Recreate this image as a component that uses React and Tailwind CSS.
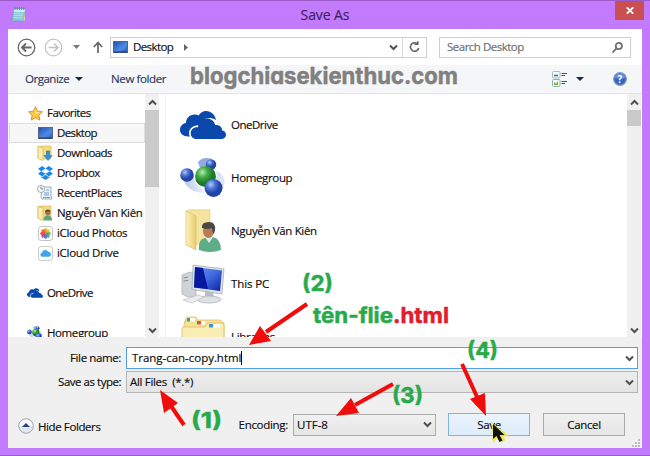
import React from 'react';

function Chevron({ up = false, className = '' }) {
  return (
    <svg className={`h-[7px] w-[9px] shrink-0 ${className}`} viewBox="0 0 9 7" fill="none" stroke="#505050" strokeWidth="2">
      <path d={up ? 'M1 5.5 4.5 2 8 5.5' : 'M1 1.5 4.5 5 8 1.5'} />
    </svg>
  );
}

function Caret({ className = 'w-[8px]' }) {
  return (
    <svg className={`h-[4px] shrink-0 ${className}`} viewBox="0 0 8 4" preserveAspectRatio="none" fill="currentColor">
      <path d="M0 0h8L4 4z" />
    </svg>
  );
}

function NotepadIcon() {
  return (
    <svg className="h-4 w-4" viewBox="0 0 16 16">
      <path d="M3 2.500h11l-1 12.500H1z" fill="#8cc9d9" stroke="#6e99a8" strokeWidth=".6" />
      <path d="M3 3h11l-.3 3H2.7z" fill="#c9edf4" />
      <path d="M3 7.5h9M2.800 9.500h9M2.600 11.500h9" stroke="#b4e4ee" strokeWidth=".7" />
      <path d="M4 1v3M6.200 1v3M8.400 1v3M10.600 1v3M12.800 1v3" stroke="#6b7c84" strokeWidth=".9" />
      <path d="M14 5v9l-1.300 1z" fill="#e8d49a" />
    </svg>
  );
}

function ScreenIcon() {
  return (
    <svg className="h-3 w-[15px]" viewBox="0 0 15 12">
      <defs>
        <linearGradient id="screen" x1="0" y1="0" x2="1" y2="1">
          <stop offset="0" stopColor="#1e4fae" />
          <stop offset=".6" stopColor="#4f8ae2" />
          <stop offset="1" stopColor="#2558b4" />
        </linearGradient>
      </defs>
      <rect x=".5" y=".5" width="14" height="11" fill="url(#screen)" stroke="#53668a" />
      <path d="M1 11h13" stroke="#1d3561" />
    </svg>
  );
}

function StarIcon() {
  return (
    <svg className="h-[15px] w-[15px]" viewBox="0 0 16 16">
      <path d="m8 .8 2.200 4.700 5.200.7-3.800 3.600 1 5.200L8 12.500 3.400 15l1-5.200L.6 6.200l5.200-.7z" fill="#fbc84a" stroke="#e08a2c" />
      <path d="m8 3 1.300 3.400 3.400.6-4.700 2z" fill="#ffe9a0" />
    </svg>
  );
}

function FolderShape() {
  return (
    <g>
      <path d="M1 1.500 5 1h9v13H5l-4-1z" fill="#f3da85" stroke="#d9b95a" strokeWidth=".7" />
      <path d="M1 1.500 6 3v12.500l-5-2z" fill="#fbeeb0" stroke="#d5b557" strokeWidth=".7" />
    </g>
  );
}

function DownloadsIcon() {
  return (
    <svg className="h-4 w-4" viewBox="0 0 16 16">
      <FolderShape />
      <path d="M9.500 6h3v4.500H15L11 15.500l-4-5h2.500z" fill="#2f93e0" stroke="#1b6fb8" strokeWidth=".6" />
    </svg>
  );
}

function UserFolderIcon() {
  return (
    <svg className="h-4 w-4" viewBox="0 0 16 16">
      <FolderShape />
      <path d="M6.500 15.500q0-5 4.200-5t4.500 5z" fill="#5aa77f" />
      <circle cx="10.800" cy="7.800" r="2.600" fill="#a9714c" />
      <path d="M8 7.500q0-3 2.800-3t2.800 3l-2-1.500z" fill="#4a4a45" />
    </svg>
  );
}

function DropboxIcon() {
  return (
    <svg className="h-[14px] w-[15px]" viewBox="0 0 16 15" fill="#1787e8">
      <path d="M4.600 0 8 2.800 3.400 5.600 0 2.900zM11.400 0 16 2.900l-3.400 2.700L8 2.800zM0 8.400l3.400-2.800L8 8.400l-3.400 2.800zM12.600 5.600 16 8.400l-4.600 2.800L8 8.400zM8 9.300l3.400 2.700 1.400-.9v1L8 15l-4.800-2.900v-1l1.400.9z" />
    </svg>
  );
}

function RecentIcon() {
  return (
    <svg className="h-4 w-4" viewBox="0 0 16 16">
      <path d="M5 2h9v9l1 3H5l-1-2z" fill="#edf3f8" stroke="#8a9bab" strokeWidth=".8" />
      <path d="M7 8h5M7 10h5M6 12.500h7M9 5h3" stroke="#6a9dcc" />
      <circle cx="4" cy="4" r="3.500" fill="#f7f9fb" stroke="#8b969f" strokeWidth=".8" />
      <path d="M4 1.800V4h2" stroke="#5e6b76" fill="none" strokeWidth=".8" />
    </svg>
  );
}

function PhotosIcon() {
  const petals = ['#f6a21b', '#d9c21d', '#71b544', '#38a99a', '#4c78cf', '#9a54b0', '#e3405c', '#ee5a2a'];
  return (
    <svg className="h-[15px] w-[15px]" viewBox="0 0 16 16">
      <rect x=".5" y=".5" width="15" height="15" rx="3" fill="#fff" stroke="#bdbdbd" />
      {petals.map((color, i) => (
        <ellipse key={color} cx="8" cy="5" rx="1.900" ry="2.800" fill={color} opacity=".9" transform={`rotate(${i * 45} 8 8)`} />
      ))}
    </svg>
  );
}

function DriveIcon() {
  return (
    <svg className="h-[15px] w-[15px]" viewBox="0 0 16 16">
      <rect x=".5" y=".5" width="15" height="15" rx="3" fill="#fff" stroke="#c4c4c4" />
      <path d="M4.500 11.500a2.300 2.300 0 0 1-.2-4.500 3.500 3.500 0 0 1 6.600-.8 2.700 2.700 0 0 1 .9 5.300z" fill="#3fa4f0" />
    </svg>
  );
}

function OneDriveIcon({ className }) {
  return (
    <svg className={className} viewBox="0 0 46 28">
      <path d="M8 25.500C3 25.500 0 22.500 0 19c0-4 2.500-6.500 6-7 0-5 4-8.500 8.500-8.500 1.500 0 3 .4 4 1C20.500 1.500 23 0 26 0c5 0 9 3.500 10 9-8-4.500-15-.5-16.500 5.200C13 13.500 9 18 9 22c0 1.500.3 2.500 1 3.500z" fill="#0a48ac" />
      <path d="M17 28c-4 0-6.300-2.600-6.300-5.600 0-3.700 3-6.400 7.300-6 0-5.600 4-8.900 8.700-8.900 4.300 0 7.500 2.500 8.600 6.600 4-.4 6.700 1.800 6.700 5.100 2.500.6 4 2.200 4 4.500 0 2.600-2 4.300-4.500 4.300z" fill="#0a48ac" />
    </svg>
  );
}

function HomegroupIcon({ className, id }) {
  return (
    <svg className={className} viewBox="0 0 46 40">
      <defs>
        <radialGradient id={`${id}-blue`} cx=".35" cy=".3">
          <stop offset="0" stopColor="#b5cdfb" />
          <stop offset=".5" stopColor="#4b74d4" />
          <stop offset="1" stopColor="#2343a5" />
        </radialGradient>
        <radialGradient id={`${id}-green`} cx=".35" cy=".3">
          <stop offset="0" stopColor="#b8efad" />
          <stop offset=".5" stopColor="#42ac48" />
          <stop offset="1" stopColor="#1e7a2c" />
        </radialGradient>
        <linearGradient id={`${id}-trail`}>
          <stop offset="0" stopColor="#b9c9ea" />
          <stop offset="1" stopColor="#eef2fa" />
        </linearGradient>
      </defs>
      <path d="M3 20q4 15 22 15l-3-5q-8-2-8-12z" fill={`url(#${id}-trail)`} />
      <path d="M18 4q5-6 14-3l-1 7q-5-1-11 2z" fill="#93abe0" />
      <path d="M36 13q12 4 7 18l-9-5q4-6 2-13z" fill="#dbe4f5" />
      <circle cx="31" cy="6.500" r="5.200" fill={`url(#${id}-blue)`} />
      <circle cx="7" cy="17" r="6.800" fill={`url(#${id}-blue)`} />
      <circle cx="25.500" cy="18.500" r="10.500" fill={`url(#${id}-green)`} />
      <circle cx="33.500" cy="30" r="9" fill={`url(#${id}-blue)`} />
    </svg>
  );
}

function LargeUserIcon() {
  return (
    <svg className="h-[44px] w-[40px]" viewBox="0 0 40 44">
      <defs>
        <linearGradient id="folderFace">
          <stop offset="0" stopColor="#fdf3bd" />
          <stop offset="1" stopColor="#e9cd6e" />
        </linearGradient>
      </defs>
      <path d="M3 2 7 .8h20V31l-15 5z" fill="#f5e3a0" stroke="#dfc468" strokeWidth=".6" />
      <path d="M3 2 13 7v34L3 36z" fill="url(#folderFace)" stroke="#d6b85c" strokeWidth=".6" />
      <path d="M16 41q-1-11 6-12l8-1q8 2 8 13-11 4-22 0z" fill="#5fad86" />
      <path d="m22 28 4 6 4-6z" fill="#dff1e8" />
      <ellipse cx="25.500" cy="22" rx="5.500" ry="7" fill="#b57e58" />
      <path d="M19 19q-1-6 7-6 7 0 6 8l-1 4q-2-2-2-6-4 2-10 0z" fill="#4c4944" />
    </svg>
  );
}

function ComputerIcon() {
  return (
    <svg className="h-[40px] w-[44px]" viewBox="0 0 44 40">
      <defs>
        <linearGradient id="monitor" x1="0" y1="0" x2="1" y2="1">
          <stop offset="0" stopColor="#6b96f0" />
          <stop offset=".5" stopColor="#3f6be0" />
          <stop offset="1" stopColor="#0a1fa0" />
        </linearGradient>
      </defs>
      <path d="M1 11 9 8l6 2v22l-8 1-6-3z" fill="#cfd4d8" stroke="#9ca3a8" strokeWidth=".6" />
      <path d="M2.500 14 7 13M2.500 17 7 16.500" stroke="#808990" />
      <path d="M24 27h8l1 7h-9z" fill="#b9c0c5" />
      <ellipse cx="28" cy="35.500" rx="12" ry="3.500" fill="#dde1e4" stroke="#a8afb4" strokeWidth=".7" />
      <path d="m12 1 31 4-2 25-30-4.500z" fill="#dce1e5" stroke="#9da7ae" strokeWidth=".7" />
      <path d="m14 3 27 3.500-2 20.500-26-3.500z" fill="url(#monitor)" />
      <path d="m14 3 8 1 5 21-14-1.500z" fill="#0819a0" />
      <path d="m2 36 15-5 6 2-12 6z" fill="#e9ecee" stroke="#b5bbbf" strokeWidth=".6" />
    </svg>
  );
}

function LibrariesIcon() {
  return (
    <svg className="h-[42px] w-[46px]" viewBox="0 0 46 42">
      <path d="M5 5 7 1h9l2 4h20v28H5z" fill="#fae9a4" stroke="#d8bb5d" strokeWidth=".8" />
      <path d="M4 9 5 5h11l2-1h22l4 3v25H4z" fill="#f8e294" stroke="#dbc06b" strokeWidth=".8" />
      <path d="M2 13q0-2 2-2h21l3-4h14q2 0 2 3v32H2z" fill="#fbeeb4" stroke="#d9bb61" strokeWidth=".8" />
      <rect x="7" y="2" width="8" height="3.500" fill="#fff" />
      <rect x="7" y="2" width="3" height="3.500" fill="#44a55b" />
      <rect x="17" y="5" width="8" height="3.500" fill="#fff" />
      <rect x="17" y="5" width="4" height="3.500" fill="#d65743" />
      <rect x="29" y="8" width="11" height="3.500" fill="#fff" />
      <rect x="29" y="8" width="4" height="3.500" fill="#3e97d1" />
    </svg>
  );
}

function SideRow({ icon, children, nested = false, selected = false, label = '' }) {
  return (
    <div className={`flex h-5 w-[136px] shrink-0 items-center border ${nested ? 'pl-[27px]' : 'pl-[17px]'} ${selected ? 'border-[#dedede] bg-[#f7f7f7]' : 'border-transparent'}`}>
      <span className="flex w-4 shrink-0 items-center justify-center">{icon}</span>
      <span className={`ml-[4px] whitespace-nowrap ${label}`}>{children}</span>
    </div>
  );
}

function FileItem({ icon, label, children }) {
  return (
    <div className="flex h-[53.200px] shrink-0 items-center">
      <span className="flex w-[46px] justify-center">{icon}</span>
      <span className={`ml-[5px] ${label}`}>{children}</span>
    </div>
  );
}

function TitleBar() {
  return (
    <div className="flex h-[29px] shrink-0 items-start border-t border-[#9a5bc8]">
      <div className="ml-[11px] mt-[5px] w-[24px]"><NotepadIcon /></div>
      <div className="flex-1 pt-[3px] text-center text-[14px] leading-[22px] tracking-[-0.100px] text-[#3c2359]">Save As</div>
      <div className="mr-[6px] flex h-[19px] w-[29px] items-center justify-center bg-[#c94f50]">
        <svg className="h-[7px] w-[8px]" viewBox="0 0 8 7" stroke="#fff" strokeWidth="1.800"><path d="m.8.300 6.400 6.400M7.200.3.800 6.700" /></svg>
      </div>
    </div>
  );
}

function Navigation() {
  return (
    <div className="flex h-9 shrink-0 items-center bg-white pl-[9px]">
      <svg className="h-[19px] w-[19px]" viewBox="0 0 19 19" fill="none" stroke="#666">
        <circle cx="9.500" cy="9.500" r="8.300" strokeWidth="1.300" />
        <path d="M14.500 9.500H5M9 5.500l-4 4 4 4" strokeWidth="1.900" />
      </svg>
      <svg className="ml-[8px] h-[19px] w-[19px]" viewBox="0 0 19 19" fill="none" stroke="#c4c4c4">
        <circle cx="9.500" cy="9.500" r="8.300" strokeWidth="1.200" />
        <path d="M4.500 9.500H14M10 5.500l4 4-4 4" strokeWidth="1.700" />
      </svg>
      <Caret className="ml-[10px] w-[7px] text-[#777]" />
      <svg className="ml-[13px] h-[12px] w-[10px]" viewBox="0 0 10 12" fill="none" stroke="#666" strokeWidth="1.700"><path d="M5 12V1.500M.8 6 5 1.500 9.200 6" /></svg>
      <div className="ml-[7px] flex h-[21px] w-[317px] items-center border border-[#cfcfcf] pl-[2px]">
        <ScreenIcon />
        <span className="ml-[5px] w-[42px] tracking-[-0.600px]">Desktop</span>
        <svg className="ml-[9px] h-[7px] w-[4px]" viewBox="0 0 4 7"><path d="M0 0v7l4-3.500z" fill="#666" /></svg>
        <span className="flex-1" />
        <Chevron className="mr-[4px]" />
        <span className="flex h-full w-[24px] items-center justify-center border-l border-[#d8d8d8]">
          <svg className="h-[12px] w-[11px]" viewBox="0 0 11 12" fill="none" stroke="#666" strokeWidth="1.600"><path d="M8.300 2.800A4.200 4.200 0 1 0 9.700 7" /><path d="M5.500 3.200h3.300V.2" /></svg>
        </span>
      </div>
      <div className="ml-[12px] flex h-[21px] w-[192px] items-center border border-[#cfcfcf] pl-[7px] pr-[7px] text-[#6d6d6d]">
        <span className="flex-1 tracking-[-0.500px]">Search Desktop</span>
        <svg className="h-[11px] w-[11px]" viewBox="0 0 11 11" fill="none" stroke="#707070" strokeWidth="1.800"><circle cx="6.800" cy="4" r="3.100" /><path d="m4.500 6.300-4 4.200" /></svg>
      </div>
    </div>
  );
}

function Toolbar() {
  return (
    <div className="flex h-[29px] shrink-0 items-center border-b border-[#e2e5e8] bg-[#f5f6f7] pl-[17px] pr-[15px] text-[#26395b]">
      <span className="w-[45px] tracking-[-0.480px]">Organize</span>
      <Caret className="ml-[5px] w-[8px] text-[#172c4c]" />
      <span className="ml-[28px] flex-1 tracking-[-0.370px]">New folder</span>
      <svg className="h-4 w-[15px]" viewBox="0 0 15 16">
        <rect x=".5" y=".5" width="7.500" height="6.500" rx="1" fill="#f4fbff" stroke="#a8bbc5" />
        <rect x=".5" y="8.500" width="7.500" height="7" rx="1" fill="#f5faf3" stroke="#94aebb" />
        <path d="M2 4.500h4" stroke="#2a79a9" strokeWidth="1.600" />
        <path d="m2 11 2 2 2-3v4H2z" fill="#70a82e" />
        <path d="M9.500 2.500H15M9.500 4.500H13M9.500 10.500H15M9.500 12.500H13" stroke="#48515c" />
      </svg>
      <Caret className="ml-[9px] w-[8px] text-[#172c4c]" />
      <svg className="ml-[29px] h-[14px] w-[14px]" viewBox="0 0 14 14">
        <circle cx="7" cy="7" r="6.300" fill="#3365c8" stroke="#8898b6" strokeWidth="1.200" />
        <path d="M1.500 6a5.600 5.600 0 0 1 11 0q-5 1.600-11 0z" fill="#7da7ef" opacity=".6" />
        <text x="7" y="10.800" textAnchor="middle" className="fill-white font-['Open_Sans'] text-[10px] font-bold">?</text>
      </svg>
    </div>
  );
}

function Browser() {
  return (
    <div className="flex h-[243px] shrink-0 overflow-hidden bg-white">
      <div className="flex w-[137px] flex-col pl-[1px] pt-[9px]">
        <SideRow icon={<StarIcon />} label="tracking-[-0.550px]">Favorites</SideRow>
        <SideRow nested selected icon={<ScreenIcon />} label="tracking-[-0.620px]">Desktop</SideRow>
        <SideRow nested icon={<DownloadsIcon />} label="tracking-[-0.550px]">Downloads</SideRow>
        <SideRow nested icon={<DropboxIcon />} label="tracking-[-0.600px]">Dropbox</SideRow>
        <SideRow nested icon={<RecentIcon />} label="tracking-[-0.470px]">RecentPlaces</SideRow>
        <SideRow nested icon={<UserFolderIcon />} label="tracking-[-0.370px]">Nguyễn Văn Kiên</SideRow>
        <SideRow nested icon={<PhotosIcon />} label="tracking-[-0.320px]">iCloud Photos</SideRow>
        <SideRow nested icon={<DriveIcon />} label="tracking-[-0.300px]">iCloud Drive</SideRow>
        <div className="h-5 shrink-0" />
        <SideRow icon={<OneDriveIcon className="h-[10px] w-[16px]" />} label="tracking-[-0.600px]">OneDrive</SideRow>
        <div className="h-5 shrink-0" />
        <SideRow icon={<HomegroupIcon id="small" className="h-[14px] w-4" />} label="tracking-[-0.400px]">Homegroup</SideRow>
      </div>
      <div className="flex w-[14px] flex-col items-center bg-[#f0f0f0]">
        <Chevron up className="mb-[4px] mt-[5px]" />
        <div className="h-[77px] w-full bg-[#cacaca]" />
        <div className="flex-1" />
        <Chevron className="mb-[3px]" />
      </div>
      <div className="w-[7px] border-r border-[#f0f0f0]" />
      <div className="flex flex-1 flex-col pl-[14px] pt-[4px]">
        <FileItem icon={<OneDriveIcon className="h-[28px] w-[46px]" />} label="tracking-[-0.500px]">OneDrive</FileItem>
        <FileItem icon={<HomegroupIcon id="large" className="h-[40px] w-[46px]" />} label="tracking-[-0.350px]">Homegroup</FileItem>
        <FileItem icon={<LargeUserIcon />} label="tracking-[-0.350px]">Nguyễn Văn Kiên</FileItem>
        <FileItem icon={<ComputerIcon />} label="tracking-[-0.100px]">This PC</FileItem>
        <FileItem icon={<LibrariesIcon />} label="tracking-[-0.300px]">Libraries</FileItem>
      </div>
      <div className="mr-[1px] flex w-[14px] flex-col items-center bg-[#f0f0f0]">
        <Chevron up className="mb-[4px] mt-[5px]" />
        <div className="h-4 w-full bg-[#cacaca]" />
        <div className="flex-1" />
        <Chevron className="mb-[3px]" />
      </div>
    </div>
  );
}

function Form() {
  return (
    <div className="flex flex-1 flex-col bg-[#f0f0f0] pt-[10px]">
      <div className="flex h-[22px] items-center">
        <span className="w-[118px] pr-[5px] text-right tracking-[-0.380px]">File name:</span>
        <div className="flex h-[22px] w-[512px] items-center border border-[#569de5] bg-white pl-[5px] pr-[3px]">
          <span className="tracking-[-0.030px]">Trang-can-copy.html</span>
          <span className="h-[14px] w-px bg-black" />
          <span className="flex-1" />
          <Chevron />
        </div>
      </div>
      <div className="mt-[2px] flex h-[22px] items-center">
        <span className="w-[118px] pr-[5px] text-right tracking-[-0.480px]">Save as type:</span>
        <div className="flex h-[22px] w-[512px] items-center border border-[#b5b5b5] bg-linear-to-b from-[#ededed] to-[#e4e4e4] pl-[3px] pr-[3px]">
          <span className="flex-1 whitespace-pre tracking-[-0.320px]">All Files  (*.*)</span>
          <Chevron />
        </div>
      </div>
      <div className="mt-[20px] flex h-[23px] items-center">
        <svg className="ml-[10px] mt-[2px] h-4 w-4" viewBox="0 0 16 16">
          <circle cx="8" cy="8" r="7.300" fill="#e2e6ef" stroke="#a0a8b7" />
          <path d="M1.500 8a6.500 6.500 0 0 1 13 0z" fill="#fafbfd" />
          <path d="m4 9 4-4 4 4z" fill="#24418a" />
        </svg>
        <span className="ml-[4px] mt-[4px] w-[66px] whitespace-nowrap tracking-[-0.400px]">Hide Folders</span>
        <span className="w-[189px] pr-[5px] text-right tracking-[-0.300px]">Encoding:</span>
        <div className="flex h-[22px] w-[143px] items-center border border-[#acacac] bg-linear-to-b from-[#f0f0f0] to-[#e5e5e5] pl-[3px] pr-[3px]">
          <span className="flex-1">UTF-8</span>
          <Chevron />
        </div>
        <button className="ml-[12px] h-[23px] w-[82px] border border-[#7eb4ea] bg-linear-to-b from-[#ecf4fc] to-[#dcecfc] tracking-[-0.300px]">Save</button>
        <button className="ml-[13px] h-[23px] w-[82px] border border-[#acacac] bg-linear-to-b from-[#f0f0f0] to-[#e5e5e5] tracking-[-0.350px]">Cancel</button>
      </div>
      <svg className="ml-auto mr-[2px] mt-[3px] h-[8px] w-[8px]" viewBox="0 0 8 8" fill="#bcbcbc"><path d="M6 0h2v2H6zM3 3h2v2H3zM6 3h2v2H6zM0 6h2v2H0zM3 6h2v2H3zM6 6h2v2H6z" /></svg>
    </div>
  );
}

function Annotations() {
  return (
    <svg className="pointer-events-none absolute inset-0 h-[456px] w-[650px] font-['Inter','Open_Sans',sans-serif] font-bold [-webkit-text-stroke:0px] [font-feature-settings:'cv11']" viewBox="0 0 650 456">
      <text x="190" y="84" textLength="268" lengthAdjust="spacingAndGlyphs" fill="#808080" stroke="#808080" strokeWidth=".5" className="text-[23px]">blogchiasekienthuc.com</text>
      <g stroke="#f10b0b" strokeWidth="4" fill="#f10b0b">
        <path d="M307 304 266 332" />
        <path d="M249 345 260 326 271 341z" stroke="none" />
        <path d="M184 425 171 406" />
        <path d="M160 390 178 403 164 413z" stroke="none" />
        <path d="m393 384-38 21" />
        <path d="m336 416 15-18 8 15z" stroke="none" />
        <path d="m462 364 16 35" />
        <path d="m486 416-16-17 15-6z" stroke="none" />
      </g>
      <g fill="#29aa4a" stroke="#29aa4a" strokeWidth=".5" className="text-[22px]">
        <text x="313" y="323" textLength="80" lengthAdjust="spacingAndGlyphs">tên-flie</text>
        <text x="393" y="323" textLength="56" lengthAdjust="spacingAndGlyphs" fill="#e51b2b" stroke="#e51b2b">.html</text>
        <text x="302" y="291" textLength="31" lengthAdjust="spacingAndGlyphs">(2)</text>
        <text x="191" y="428" textLength="31" lengthAdjust="spacingAndGlyphs">(1)</text>
        <text x="392" y="403" textLength="31" lengthAdjust="spacingAndGlyphs">(3)</text>
        <text x="467" y="358" textLength="31" lengthAdjust="spacingAndGlyphs">(4)</text>
      </g>
      <path d="m493 425 1 15 4-4 4 5 2-1-2-5h4z" fill="#ece83d" stroke="#ece83d" strokeWidth="2.500" opacity=".85" />
      <path d="M493 424v15l3.500-3 3 6 3-1.500-3-5.500h5z" fill="#111" />
    </svg>
  );
}

export default function App() {
  return (
    <main className="relative flex h-[456px] w-[650px] flex-col overflow-hidden bg-[#c27aff] font-['Open_Sans','Noto_Sans',sans-serif] text-[11.500px] leading-[18px] text-[#0c0c0c] [-webkit-text-stroke:0.150px]">
      <TitleBar />
      <div className="mx-[8px] flex h-[419px] flex-col">
        <Navigation />
        <Toolbar />
        <Browser />
        <Form />
      </div>
      <div className="h-[8px] shrink-0 border-b border-[#9a5bc8]" />
      <Annotations />
    </main>
  );
}
